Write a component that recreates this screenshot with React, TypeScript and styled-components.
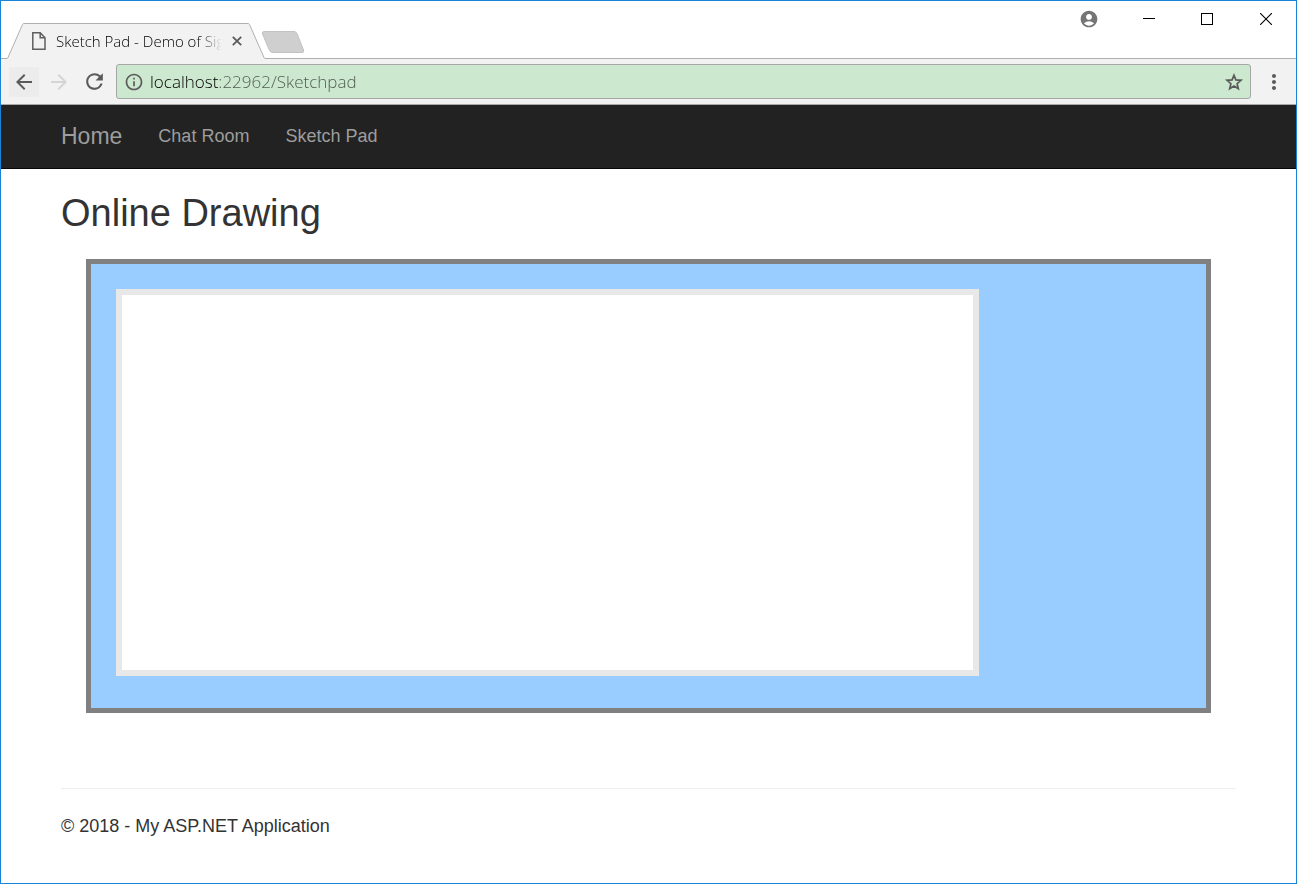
import React from "react";
import styled, { createGlobalStyle, css } from "styled-components";
import {
  MdAccountCircle,
  MdArrowBack,
  MdArrowForward,
  MdInfoOutline,
  MdMoreVert,
  MdRefresh,
} from "react-icons/md";

const GlobalStyle = createGlobalStyle`
  *, *::before, *::after { box-sizing: border-box; }
  body {
    margin: 0;
    background: #fff;
    color: #333;
    font-family: "Liberation Sans", Arial, sans-serif;
    font-size: 18px;
    line-height: 25px;
  }
  button { margin: 0; padding: 0; border: 0; background: none; }
`;

const chromeFont = css`
  font-family: "Open Sans", "Noto Sans", sans-serif;
  font-weight: 300;
`;

const Window = styled.div`
  display: flex;
  flex-direction: column;
  min-height: 100vh;
  border: 1px solid #1883d7;
  background: #fff;
`;

const TitleBar = styled.header`
  display: flex;
  justify-content: space-between;
  align-items: flex-start;
  height: 58px;
  border-bottom: 1px solid #b0b0b0;
`;

const TabStrip = styled.div`
  display: flex;
  align-self: flex-end;
  align-items: flex-end;
  min-width: 0;
  margin-bottom: -1px;
  padding-left: 5px;
`;

const Tab = styled.div`
  display: flex;
  height: 36px;
`;

const TabEdge = styled.svg`
  display: block;
  flex: none;
  width: 18px;
  height: 36px;
`;

const TabBody = styled.div`
  display: flex;
  align-items: center;
  width: 224px;
  padding: 0 4px 2px 8px;
  border-top: 1px solid #b0b0b0;
  background: #f2f2f2;
`;

const TabTitle = styled.span`
  ${chromeFont}
  flex: 1;
  overflow: hidden;
  margin: 0 8px 0 10px;
  font-size: 15px;
  line-height: 20px;
  white-space: nowrap;
  color: #000;
  mask-image: linear-gradient(to right, #000 calc(100% - 24px), transparent);
`;

const TabClose = styled.button`
  display: flex;
  align-items: center;
  justify-content: center;
  width: 14px;
  height: 14px;
`;

const NewTab = styled.button`
  display: block;
  height: 24px;
  margin: 0 0 5px -5px;

  svg { display: block; }
`;

const WindowButtons = styled.div`
  display: flex;
`;

const WindowButton = styled.button<{ $width?: number }>`
  display: flex;
  align-items: center;
  justify-content: center;
  width: ${({ $width = 58 }) => $width}px;
  height: 35px;
  color: #757575;
`;

const Toolbar = styled.div`
  display: flex;
  align-items: center;
  height: 46px;
  padding: 0 9px 0 8px;
  border-bottom: 1px solid #a8a8a8;
  background: #f2f2f2;
`;

const ToolButton = styled.button<{ $hover?: boolean; $muted?: boolean }>`
  display: flex;
  align-items: center;
  justify-content: center;
  flex: none;
  width: 30px;
  height: 30px;
  margin-right: 5px;
  background: ${({ $hover }) => ($hover ? "#ececec" : "transparent")};
  color: ${({ $muted }) => ($muted ? "#d4d4d4" : "#5a5a5a")};
`;

const AddressBar = styled.div`
  display: flex;
  align-items: center;
  flex: 1;
  height: 35px;
  margin-left: 2px;
  padding: 0 4px 0 7px;
  border: 1px solid #a6a6a6;
  border-radius: 3px;
  background: #cce8cf;
  color: #5a5a5a;
`;

const AddressInput = styled.input`
  ${chromeFont}
  flex: 1;
  min-width: 0;
  height: 24px;
  margin: 0 8px 0 6px;
  padding: 0;
  border: 0;
  outline: 0;
  background: linear-gradient(to right, #000 69px, #4c574e 69px);
  background-clip: text;
  -webkit-background-clip: text;
  -webkit-text-fill-color: transparent;
  color: #4c574e;
  font-size: 17px;
`;

const IconButton = styled.button`
  display: flex;
  color: #5a5a5a;
`;

const MenuButton = styled(IconButton)`
  margin-left: 10px;
  padding: 0 1px;
`;

const NavBar = styled.nav`
  display: flex;
  align-items: center;
  gap: 36px;
  height: 64px;
  padding: 0 60px;
  border-bottom: 1px solid #080808;
  background: #222;
`;

const NavLink = styled.a<{ $brand?: boolean }>`
  color: #9d9d9d;
  font-size: ${({ $brand }) => ($brand ? 23 : 18)}px;
  text-decoration: none;
`;

const Content = styled.main`
  padding: 24px 60px 0;
`;

const Heading = styled.h2`
  margin: 0 0 25px;
  font-size: 38px;
  font-weight: 400;
  line-height: 41px;
`;

const SketchPanel = styled.section`
  margin: 0 25px;
  padding: 25px 25px 32px;
  border: 5px solid #808080;
  background: #99ccff;
`;

const SketchCanvas = styled.canvas`
  display: block;
  width: 863px;
  max-width: 100%;
  height: 387px;
  border: 6px solid #e8e8e8;
  background: #fff;
`;

const Footer = styled.footer`
  margin: 75px 60px 0;
  padding: 25px 0 44px;
  border-top: 1px solid #eee;

  p { margin: 0; }
`;

export default function App() {
  return (
    <>
      <GlobalStyle />
      <Window>
        <TitleBar>
          <TabStrip>
            <Tab>
              <TabEdge viewBox="0 0 18 36" aria-hidden="true">
                <path d="M0 36 L1.5 35.5 L16.5 1.5 Q17 .5 18 .5 V36Z" fill="#f2f2f2" />
                <path d="M0 35.5 Q1.5 35.5 2 34.5 L16.5 1.5 Q17 .5 18 .5" fill="none" stroke="#b0b0b0" />
              </TabEdge>
              <TabBody>
                <svg width="14" height="18" viewBox="0 0 14 18" fill="none" stroke="#5f5f5f" strokeWidth="1.5" aria-hidden="true">
                  <path d="M.8.8H8.2L13 5.8V17.2H.8Z" />
                  <path d="M8.2.8V5.8H13" />
                </svg>
                <TabTitle>Sketch Pad - Demo of SignalR</TabTitle>
                <TabClose aria-label="Close tab">
                  <svg width="10" height="10" viewBox="0 0 10 10" stroke="#5a5a5a" strokeWidth="1.8">
                    <path d="M.8.8 9.2 9.2M9.2.8.8 9.2" />
                  </svg>
                </TabClose>
              </TabBody>
              <TabEdge viewBox="0 0 18 36" aria-hidden="true">
                <path d="M0 .5 Q1 .5 1.5 1.5 L16.5 35.5 L18 36 H0Z" fill="#f2f2f2" />
                <path d="M0 .5 Q1 .5 1.5 1.5 L16 34.5 Q16.5 35.5 18 35.5" fill="none" stroke="#b0b0b0" />
              </TabEdge>
            </Tab>
            <NewTab aria-label="New tab">
              <svg width="44" height="24" viewBox="0 0 44 24">
                <path
                  d="M3 1.5H33Q35 1.5 36 3.5L42.500 20Q43.500 22.500 41 22.500H12Q9.500 22.500 8.500 20.500L1.500 4Q.8 1.500 3 1.500Z"
                  fill="#cfcfcf"
                  stroke="#c2c2c2"
                />
              </svg>
            </NewTab>
          </TabStrip>
          <WindowButtons>
            <WindowButton $width={62} aria-label="Profile">
              <MdAccountCircle size={20} />
            </WindowButton>
            <WindowButton aria-label="Minimize">
              <svg width="12" height="12" viewBox="0 0 12 12" stroke="#000" shapeRendering="crispEdges">
                <path d="M0 5.500H12" />
              </svg>
            </WindowButton>
            <WindowButton aria-label="Maximize">
              <svg width="12" height="12" viewBox="0 0 12 12" fill="none" stroke="#000" shapeRendering="crispEdges">
                <path d="M.5.5H11.500V11.500H.5Z" />
              </svg>
            </WindowButton>
            <WindowButton $width={60} aria-label="Close">
              <svg width="12" height="12" viewBox="0 0 12 12" stroke="#000" strokeWidth="1.100">
                <path d="M0 0 12 12M12 0 0 12" />
              </svg>
            </WindowButton>
          </WindowButtons>
        </TitleBar>

        <Toolbar>
          <ToolButton $hover aria-label="Back">
            <MdArrowBack size={24} />
          </ToolButton>
          <ToolButton $muted aria-label="Forward">
            <MdArrowForward size={24} />
          </ToolButton>
          <ToolButton aria-label="Reload">
            <MdRefresh size={25} />
          </ToolButton>
          <AddressBar>
            <MdInfoOutline size={20} />
            <AddressInput aria-label="Address" defaultValue="localhost:22962/Sketchpad" />
            <IconButton aria-label="Bookmark this page">
              <svg width="24" height="24" viewBox="0 0 24 24" fill="none" stroke="currentColor" strokeWidth="1.7">
                <path d="M12 5.200 13.900 9.900 19 10.300 15.100 13.700 16.300 18.700 12 16 7.700 18.700 8.900 13.700 5 10.300 10.100 9.900Z" />
              </svg>
            </IconButton>
          </AddressBar>
          <MenuButton aria-label="Menu">
            <MdMoreVert size={24} />
          </MenuButton>
        </Toolbar>

        <NavBar>
          <NavLink href="#home" $brand>Home</NavLink>
          <NavLink href="#chat">Chat Room</NavLink>
          <NavLink href="#sketchpad">Sketch Pad</NavLink>
        </NavBar>

        <Content>
          <Heading>Online Drawing</Heading>
          <SketchPanel>
            <SketchCanvas aria-label="Drawing area" />
          </SketchPanel>
        </Content>

        <Footer>
          <p>© 2018 - My ASP.NET Application</p>
        </Footer>
      </Window>
    </>
  );
}
